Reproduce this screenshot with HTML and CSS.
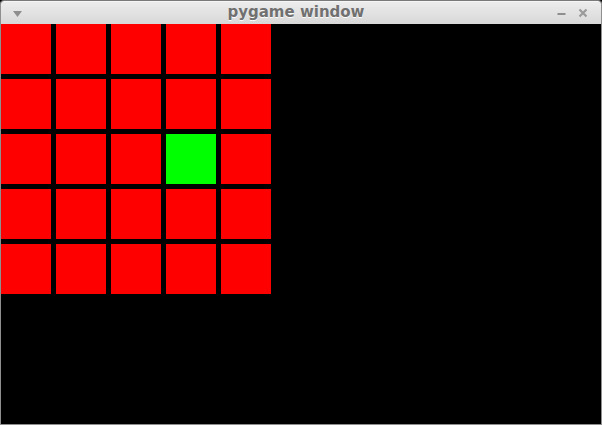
FILE: index.html
```html
<!DOCTYPE html>
<html>
<head>
<meta charset="utf-8">
<link rel="stylesheet" href="styles.css">
</head>
<body>
<div class="window">
  <div class="titlebar">
    <svg class="menu" width="9" height="6" viewBox="0 0 9 6"><polygon points="0,0 9,0 4.5,6" fill="#8e8e8e"/></svg>
    <div class="title">pygame window</div>
    <div class="controls">
      <svg width="9" height="10" viewBox="0 0 9 10"><rect x="0.5" y="5" width="8" height="2" fill="#8e8e8e"/></svg>
      <svg width="10" height="10" viewBox="0 0 10 10"><path d="M1.5 1.5 L8.5 8.5 M8.5 1.5 L1.5 8.5" stroke="#9a9a9a" stroke-width="2.2"/></svg>
    </div>
  </div>
  <div class="content">
    <div class="grid">
      <div class="cell"></div><div class="cell"></div><div class="cell"></div><div class="cell"></div><div class="cell"></div>
      <div class="cell"></div><div class="cell"></div><div class="cell"></div><div class="cell"></div><div class="cell"></div>
      <div class="cell"></div><div class="cell"></div><div class="cell"></div><div class="cell on"></div><div class="cell"></div>
      <div class="cell"></div><div class="cell"></div><div class="cell"></div><div class="cell"></div><div class="cell"></div>
      <div class="cell"></div><div class="cell"></div><div class="cell"></div><div class="cell"></div><div class="cell"></div>
    </div>
  </div>
</div>
</body>
</html>
```
FILE: styles.css
```css
html, body { margin: 0; padding: 0; background: #000; }
.window {
  width: 600px;
  height: 423px;
  border: 1px solid #8f8f8f;
  border-top-color: #7a7a7a;
  border-radius: 4px 4px 0 0;
  background: #000;
  display: flex;
  flex-direction: column;
  overflow: hidden;
}
.titlebar {
  height: 23px;
  flex: none;
  background: linear-gradient(#ececec, #d8d8d8);
  border-top: 1px solid #f6f6f6;
  box-sizing: border-box;
  display: flex;
  align-items: center;
  position: relative;
}
.menu { margin-left: 12px; margin-top: 1px; }
.title {
  position: absolute;
  left: 0; right: 10px; top: 1px;
  text-align: center;
  font-family: "DejaVu Sans", sans-serif;
  font-weight: bold;
  font-size: 15px;
  color: #707070;
  text-shadow: 0 1px 0 #fbfbfb;
}
.controls {
  margin-left: auto;
  margin-right: 13px;
  display: flex;
  gap: 12px;
}
.content { flex: 1; background: #000; }
.grid {
  display: grid;
  grid-template-columns: repeat(5, 50px);
  grid-auto-rows: 50px;
  gap: 5px;
}
.cell { background: #ff0000; }
.cell.on { background: #00ff00; }
```
